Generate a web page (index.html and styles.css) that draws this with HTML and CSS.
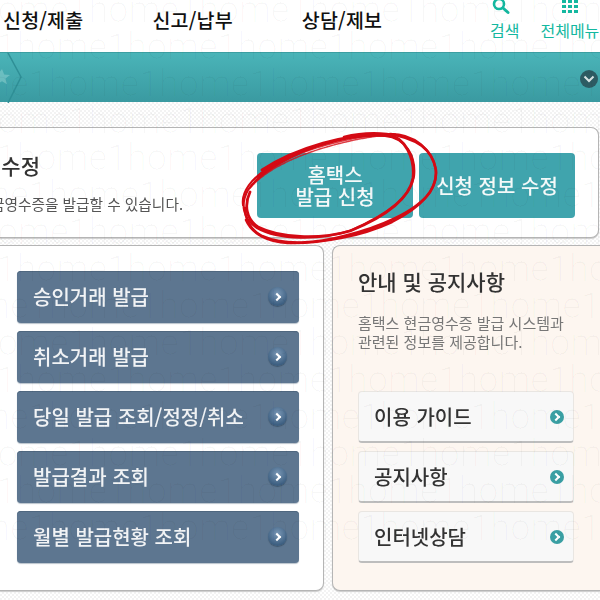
FILE: index.html
```html
<!DOCTYPE html>
<html lang="ko">
<head>
  <meta charset="UTF-8">
  <title>홈택스 현금영수증</title>
  <link rel="stylesheet" href="styles.css">
</head>
<body>
  <header class="top">
    <nav class="gnb">
      <a>신청/제출</a>
      <a>신고/납부</a>
      <a>상담/제보</a>
    </nav>
    <div class="tools">
      <a class="tool tool-search">
        <svg width="20" height="20" viewBox="0 0 20 20"><circle cx="8" cy="7" r="5" fill="none" stroke="#14b8a0" stroke-width="2.6"/><path d="M12 11l5 4.500" stroke="#14b8a0" stroke-width="3" stroke-linecap="round"/></svg>
        <span>검색</span>
      </a>
      <a class="tool tool-menu">
        <span class="dots"><i></i><i></i><i></i><i></i><i></i><i></i><i></i><i></i><i></i></span>
        <span>전체메뉴</span>
      </a>
    </div>
  </header>

  <div class="band">
    <svg class="crumb" width="30" height="50" viewBox="0 0 30 50">
      <path d="M2 16l2.200 5.500 5.800.4-4.500 3.700 1.500 5.700L2 28.200l-5 3.100 1.500-5.700L-8 21.900l5.800-.4z" fill="#8ccfd0" opacity=".55"/>
      <path d="M8 0l13 24L8 50" fill="none" stroke="#2f8f96" stroke-width="1.500"/>
    </svg>
    <span class="band-toggle">
      <svg width="12" height="8" viewBox="0 0 12 8"><path d="M1.500 1.500L6 6l4.500-4.500" fill="none" stroke="#d8e4e4" stroke-width="2"/></svg>
    </span>
  </div>

  <main class="content">
    <section class="apply">
      <div class="apply-text">
        <h2>현금영수증 수정</h2>
        <p>홈택스에서 현금영수증을 발급할 수 있습니다.</p>
      </div>
      <div class="apply-btns">
        <a class="btn-teal">홈택스<br>발급 신청</a>
        <a class="btn-teal">신청 정보 수정</a>
      </div>
    </section>

    <div class="panels">
      <section class="panel panel-left">
        <a class="btn-blue">승인거래 발급<i class="go"></i></a>
        <a class="btn-blue">취소거래 발급<i class="go"></i></a>
        <a class="btn-blue">당일 발급 조회/정정/취소<i class="go"></i></a>
        <a class="btn-blue">발급결과 조회<i class="go"></i></a>
        <a class="btn-blue">월별 발급현황 조회<i class="go"></i></a>
      </section>
      <section class="panel panel-right">
        <h3>안내 및 공지사항</h3>
        <p>홈택스 현금영수증 발급 시스템과<br>관련된 정보를 제공합니다.</p>
        <div class="links">
          <a class="btn-light">이용 가이드<i class="go-teal"></i></a>
          <a class="btn-light">공지사항<i class="go-teal"></i></a>
          <a class="btn-light">인터넷상담<i class="go-teal"></i></a>
        </div>
      </section>
    </div>
  </main>

  <!-- watermark and the hand drawn circle lie over the page -->
  <div class="watermark">home1home1home1home1home1home1home1home1home1home1home1home1home1home1home1home1home1home1home1home1home1home1home1home1home1home1home1home1home1home1home1home1home1home1home1home1home1home1home1home1home1home1home1home1home1home1home1home1home1home1home1home1home1home1home1home1home1home1home1home1home1home1home1home1home1home1home1home1home1home1home1home1home1home1home1home1home1home1home1home1home1home1home1home1home1</div>

  <svg class="scribble" width="600" height="600" viewBox="0 0 600 600">
    <g fill="none" stroke="#d40a14" stroke-linecap="round" stroke-linejoin="round">
      <path stroke-width="2.200" d="M258 176C290 152 345 133 385 136C406 138 416 156 414 176C411 198 384 216 352 230C320 241 278 240 257 228C243 219 240 204 248 190C256 178 272 166 300 153"/>
      <path stroke-width="2.800" d="M262 170C295 148 350 132 388 135C405 137 415 158 413 178C409 200 382 218 350 231C318 240 280 238 258 227C246 219 244 205 250 192"/>
      <path stroke-width="2.500" d="M344 137C372 130 404 133 422 146C437 158 440 176 430 192C416 212 378 228 344 236C318 243 284 246 262 236C250 230 245 218 245 208"/>
      <path stroke-width="2.500" d="M390 134C415 134 432 150 436 170C438 190 420 208 392 222C362 236 320 244 288 243C268 242 252 234 246 220"/>
      <path stroke-width="2" d="M243 205C241 192 252 178 268 168C280 160 296 153 312 148"/>
      <path stroke-width="1.500" stroke-dasharray="4 1" opacity=".8" d="M250 188C270 165 310 150 350 141C368 137 388 134 400 136"/>
      <path stroke-width="1.500" stroke-dasharray="3 1" opacity=".8" d="M254 180C276 160 316 146 352 139C372 135 386 133 396 134"/>
    </g>
  </svg>
</body>
</html>
```

FILE: styles.css
```css
* {
  box-sizing: border-box;
}

html,
body {
  height: 600px;
  overflow: hidden;
}

body {
  margin: 0;
  position: relative;
  font-family: "Noto Sans CJK KR", "Noto Sans", sans-serif;
  background-color: #fff;
  background-image: conic-gradient(#f3f3f3 25%, #fff 0 50%, #f3f3f3 0 75%, #fff 0);
  background-size: 4px 4px;
}

a {
  color: inherit;
  text-decoration: none;
}

/* header */
.top {
  height: 52px;
  background: #fff;
  display: flex;
  justify-content: space-between;
}

.gnb {
  display: flex;
  gap: 69px;
  padding: 7px 0 0 3px;
  font-size: 19.500px;
  font-weight: 500;
  line-height: 26px;
  color: #111;
  letter-spacing: .2px;
}

.tools {
  display: flex;
  gap: 21px;
  width: 110px;
  color: #14b8a0;
  font-size: 16px;
  line-height: 18px;
  white-space: nowrap;
}

.tool {
  display: flex;
  flex-direction: column;
  align-items: center;
  height: 52px;
}

.tool-search svg {
  margin: -3px 8px 4px 0;
}

.tool-menu {
  align-items: flex-start;
}

.dots {
  display: grid;
  grid-template-columns: repeat(3, 4px);
  grid-auto-rows: 3px;
  gap: 2px;
  margin: 0 0 8px 22px;
  height: 13px;
}

.dots i {
  background: #14b8a0;
}

/* band */
.band {
  height: 50px;
  background: linear-gradient(#4ab4b8, #3a9aa1);
  border-top: 1px solid #3c9fa2;
  display: flex;
  justify-content: space-between;
  align-items: center;
  padding-right: 2px;
}

.band-toggle {
  width: 18px;
  height: 18px;
  margin-top: 2px;
  border-radius: 50%;
  background: #2d5b63;
  display: flex;
  align-items: center;
  justify-content: center;
}

/* apply card */
.content {
  padding-top: 25px;
  filter: blur(.4px);
}

.apply {
  height: 111px;
  margin-right: 1px;
  background: #fff;
  border: 1px solid #b5b5b5;
  border-left: 0;
  border-radius: 0 8px 8px 0;
  box-shadow: 0 1px 1px #ccc;
  display: flex;
}

.apply-text {
  width: 183px;
  display: flex;
  flex-direction: column;
  align-items: flex-end;
  white-space: nowrap;
  padding-top: 22px;
}

.apply-text h2 {
  margin: 0 143px 0 0;
  font-size: 21px;
  font-weight: 500;
  line-height: 30px;
  color: #333;
}

.apply-text p {
  margin: 14px 0 0;
  font-size: 14.700px;
  line-height: 20px;
  color: #555;
}

.apply-btns {
  display: flex;
  gap: 6px;
  margin: 25px 0 0 74px;
}

.btn-teal {
  width: 156px;
  height: 65px;
  border-radius: 4px;
  background: #40a4ad;
  color: #f4f9f9;
  font-size: 20px;
  font-weight: 500;
  line-height: 22px;
  text-align: center;
  white-space: nowrap;
  display: flex;
  align-items: center;
  justify-content: center;
}

/* panels */
.panels {
  display: flex;
  gap: 8px;
  margin-top: 7px;
}

.panel {
  height: 346px;
  border: 1px solid #b5b5b5;
  box-shadow: 0 1px 1px #ccc;
}

.panel-left {
  width: 324px;
  background: #fff;
  border-left: 0;
  border-radius: 0 8px 8px 0;
  padding: 25px 24px 0 17px;
  display: flex;
  flex-direction: column;
  gap: 8px;
}

.panel-right {
  width: 268px;
  background: #fdf6f0;
  border-right: 0;
  border-radius: 8px 0 0 8px;
  padding: 20px 26px 0 25px;
}

.panel-right h3 {
  margin: 0;
  font-size: 21px;
  font-weight: 500;
  line-height: 30px;
  color: #333;
}

.panel-right p {
  margin: 17px 0 0;
  font-size: 15px;
  line-height: 19px;
  color: #777;
}

.links {
  display: flex;
  flex-direction: column;
  gap: 8px;
  margin-top: 40px;
}

.btn-blue,
.btn-light {
  height: 52px;
  border-radius: 4px;
  font-size: 20px;
  font-weight: 500;
  display: flex;
  align-items: center;
  justify-content: space-between;
  white-space: nowrap;
}

.btn-blue {
  padding: 0 12px 1px 16px;
  background: #5d7690;
  box-shadow: inset 0 1px 0 #4f677f, 0 1px 1px #b9c2cb;
  color: #f1f3f5;
}

.btn-light {
  padding: 0 9px 0 15px;
  background: #f8f8f8;
  border: 1px solid #e9e6e2;
  border-bottom: 2px solid #bdbdbd;
  color: #333;
}

.go,
.go-teal {
  display: flex;
  align-items: center;
  justify-content: center;
  border-radius: 50%;
  flex: none;
}

.go::after,
.go-teal::after {
  content: "";
  width: 4px;
  height: 4px;
  margin-left: -2px;
  border-top: 2px solid #fff;
  border-right: 2px solid #fff;
  transform: rotate(45deg);
}

.go {
  width: 19px;
  height: 19px;
  background: radial-gradient(circle at 50% 35%, #7a98b6, #3a5c7e 75%);
  box-shadow: 0 1px 1px #3f566c;
}

.go-teal {
  width: 14px;
  height: 14px;
  background: #3a9fa3;
}

/* overlays */
.watermark {
  position: absolute;
  top: -8px;
  left: -22px;
  width: 640px;
  height: 620px;
  overflow: hidden;
  overflow-wrap: anywhere;
  font-family: Roboto, sans-serif;
  font-size: 36px;
  font-weight: 300;
  line-height: 37px;
  color: rgba(0, 0, 0, .028);
  pointer-events: none;
}

.scribble {
  position: absolute;
  top: 0;
  left: 0;
  pointer-events: none;
}
```
